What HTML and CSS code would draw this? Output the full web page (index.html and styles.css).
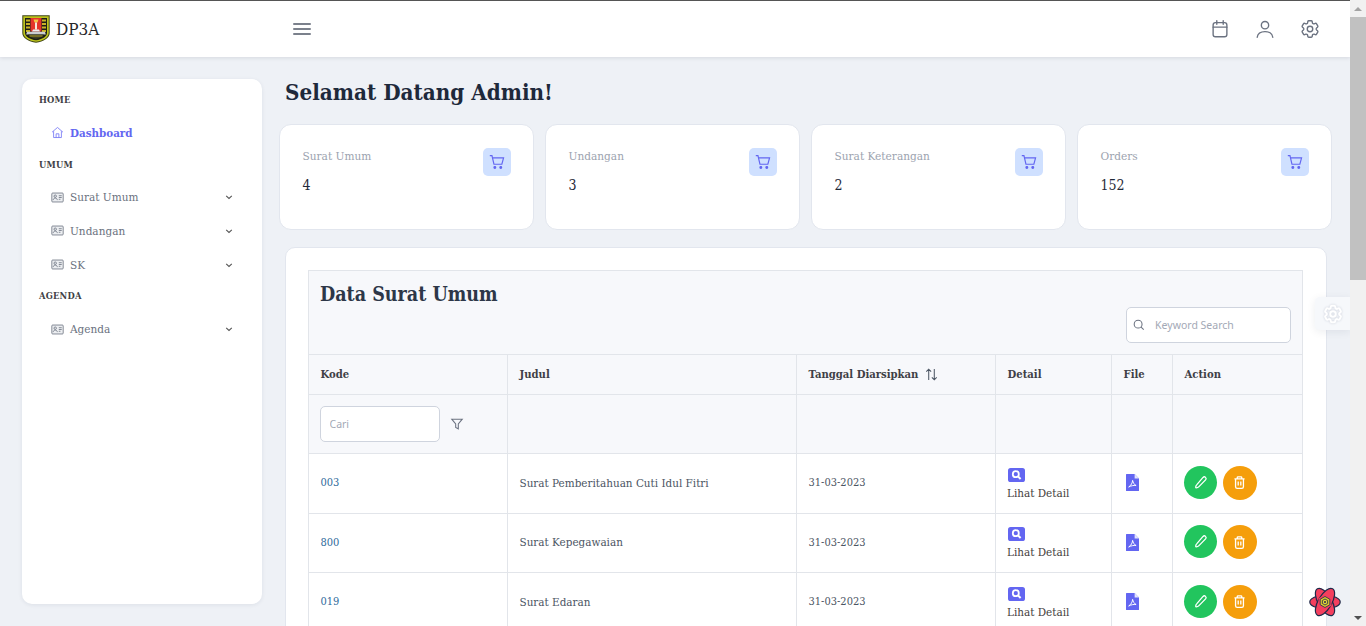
FILE: index.html
```html
<!DOCTYPE html>
<html lang="id">
<head>
<meta charset="utf-8">
<title>DP3A</title>
<link rel="stylesheet" href="styles.css">
</head>
<body>
<svg class="sprite" aria-hidden="true">
  <symbol id="gear" viewBox="0 0 24 24"><path d="M9.594 3.940c.09-.542.56-.94 1.110-.94h2.593c.55 0 1.020.398 1.110.94l.213 1.281c.063.374.313.686.645.870.074.040.147.083.22.127.324.196.72.257 1.075.124l1.217-.456a1.125 1.125 0 011.370.49l1.296 2.247a1.125 1.125 0 01-.26 1.431l-1.003.827c-.293.24-.438.613-.431.992a6.759 6.759 0 010 .255c-.007.378.138.75.43.99l1.005.828c.424.35.534.954.26 1.43l-1.298 2.247a1.125 1.125 0 01-1.369.491l-1.217-.456c-.355-.133-.75-.072-1.076.124a6.570 6.570 0 01-.22.128c-.331.183-.581.495-.644.869l-.213 1.280c-.09.543-.56.941-1.110.941h-2.594c-.55 0-1.020-.398-1.110-.94l-.213-1.281c-.062-.374-.312-.686-.644-.87a6.520 6.520 0 01-.22-.127c-.325-.196-.72-.257-1.076-.124l-1.217.456a1.125 1.125 0 01-1.369-.49l-1.297-2.247a1.125 1.125 0 01.26-1.431l1.004-.827c.292-.24.437-.613.43-.992a6.932 6.932 0 010-.255c.007-.378-.138-.75-.43-.99l-1.004-.828a1.125 1.125 0 01-.26-1.430l1.297-2.247a1.125 1.125 0 011.370-.491l1.216.456c.356.133.751.072 1.076-.124.072-.044.146-.087.22-.128.332-.183.582-.495.644-.869l.214-1.281z"/><circle cx="12" cy="12" r="3"/></symbol>
  <symbol id="idcard" viewBox="0 0 16 16"><rect x="1" y="2.500" width="14" height="11" rx="1" fill="#eceef1"/><circle cx="5.200" cy="6.400" r="1.500"/><path d="M2.600 11.200c.3-1.800 1.300-2.400 2.600-2.400s2.300.6 2.600 2.400M9.600 5.800h3.600M9.600 8h3.600M9.600 10.200h2"/></symbol>
  <symbol id="chev" viewBox="0 0 12 12"><path d="M3.200 4.800 6 7.400l2.800-2.600"/></symbol>
  <symbol id="cart" viewBox="0 0 20 20"><path d="M2 3h2.400l2.200 9.500h8.800l1.900-7H5"/><circle cx="7.600" cy="16" r="1" fill="currentColor"/><circle cx="14.200" cy="16" r="1" fill="currentColor"/></symbol>
  <symbol id="lens" viewBox="0 0 17 14"><rect width="17" height="14" rx="2.600" fill="#6366f1"/><circle cx="7.800" cy="6.200" r="3" fill="none" stroke="#fff" stroke-width="1.800"/><path d="m10 8.400 2.600 2.600" fill="none" stroke="#fff" stroke-width="2"/></symbol>
  <symbol id="pdf" viewBox="0 0 13 17"><path d="M.6 0h8l4.400 4.400v12a.6.6 0 0 1-.6.600H.6a.6.6 0 0 1-.6-.6V.6A.6.6 0 0 1 .6 0z" fill="#6366f1"/><path d="M8.600 .1 12.900 4.400H8.600z" fill="#e4e5fd"/><path d="M6.600 6.400c-.1 2.200-1.400 5-3.900 6.600 2.300-1.200 4.800-1.800 7.400-1.500-1.800-.7-3-2.800-3.500-5.100z" fill="none" stroke="#fff" stroke-width="1"/></symbol>
  <symbol id="pencil" viewBox="0 0 16 16"><path d="M10.700 2.600a1.800 1.800 0 0 1 2.700 2.600l-7.300 7.500c-.7.700-1.500 1-2.500 1-.5 0-.7-.3-.7-.7 0-1 .3-1.800 1-2.500z"/></symbol>
  <symbol id="trash" viewBox="0 0 16 16"><path d="M2.600 4.200h10.800M5.600 4.200V2.600c0-.4.300-.7.700-.7h3.400c.4 0 .7.300.7.700v1.600M3.800 4.200v8.300c0 1 .7 1.700 1.700 1.700h5c1 0 1.700-.7 1.700-1.700V4.200M6.600 7v4.200M9.400 7v4.200"/></symbol>
</svg>

<div class="window">
  <div class="page">
    <header class="topbar">
      <div class="brand">
        <svg class="logo" viewBox="0 0 28 28" aria-hidden="true">
          <path d="M.3 .3h27.400v17.700c0 4.800-6.200 8.900-13.700 9.700C6.500 26.900.3 22.800.3 18z" fill="#3f4414"/>
          <path d="M1.300 1.300h25.400v16.600c0 4.300-5.800 8-12.700 8.800-6.900-.8-12.700-4.500-12.700-8.800z" fill="#bcc41c"/>
          <path d="M3 3h22v15c0 3.500-5 6.600-11 7.300-6-.7-11-3.800-11-7.300z" fill="#1d1f14"/>
          <g fill="#c9b327">
            <rect x="4" y="4.500" width="4" height="2"/><rect x="4" y="8" width="4" height="2"/><rect x="4" y="11.500" width="4" height="2"/><rect x="4" y="15" width="4" height="2"/>
            <rect x="20" y="4.500" width="4" height="2"/><rect x="20" y="8" width="4" height="2"/><rect x="20" y="11.500" width="4" height="2"/><rect x="20" y="15" width="4" height="2"/>
          </g>
          <rect x="8.500" y="3" width="11" height="13.500" fill="#e5342a"/>
          <path d="M11.500 4.500h5l-1 3h-3z" fill="#f3c445"/>
          <path d="M13 7.500h2v7h-2z" fill="#f6e7d9"/>
          <path d="M11 14.500h6l1 2h-8z" fill="#f0f0f0"/>
          <path d="M5 16.800h18l.8 2.700H4.200z" fill="#c9cdd0"/>
          <path d="M6 19.500h16c-1.500 2.200-4.500 3.800-8 4.300-3.500-.5-6.500-2.100-8-4.300z" fill="#3b3f24"/>
          <path d="M7.500 21h13" stroke="#c9b327" stroke-width=".8"/>
        </svg>
        <span class="brand-name">DP3A</span>
      </div>
      <button class="burger" aria-label="Menu"><i></i><i></i><i></i></button>
      <div class="top-actions">
        <svg class="top-icon" viewBox="0 0 24 24"><rect x="4.500" y="5" width="15" height="15.500" rx="2.500"/><path d="M8.500 2.800v4M15.500 2.800v4M4.500 10h15"/></svg>
        <svg class="top-icon" viewBox="0 0 24 24"><circle cx="12" cy="7.800" r="4"/><path d="M3.500 21c.6-4.200 4-6.200 8.500-6.200s7.900 2 8.500 6.200"/></svg>
        <svg class="top-icon" viewBox="0 0 24 24"><use href="#gear"/></svg>
      </div>
    </header>

    <div class="content">
      <aside class="sidebar">
        <h4 class="nav-head">HOME</h4>
        <a class="nav-item active"><svg class="nav-ic" viewBox="0 0 16 16"><path d="M1.300 7.600 8 1.800l6.700 5.800M3.200 6.500v7.700h9.600V6.500M6.300 14.200V9.600h3.400v4.600"/></svg><span>Dashboard</span></a>
        <h4 class="nav-head">UMUM</h4>
        <a class="nav-item"><svg class="nav-ic"><use href="#idcard"/></svg><span>Surat Umum</span><svg class="chev"><use href="#chev"/></svg></a>
        <a class="nav-item"><svg class="nav-ic"><use href="#idcard"/></svg><span>Undangan</span><svg class="chev"><use href="#chev"/></svg></a>
        <a class="nav-item"><svg class="nav-ic"><use href="#idcard"/></svg><span>SK</span><svg class="chev"><use href="#chev"/></svg></a>
        <h4 class="nav-head">AGENDA</h4>
        <a class="nav-item"><svg class="nav-ic"><use href="#idcard"/></svg><span>Agenda</span><svg class="chev"><use href="#chev"/></svg></a>
      </aside>

      <main class="main">
        <h1 class="welcome">Selamat Datang Admin!</h1>
        <section class="stats">
          <article class="stat"><div><p class="stat-label">Surat Umum</p><p class="stat-value">4</p></div><span class="stat-ic"><svg><use href="#cart"/></svg></span></article>
          <article class="stat"><div><p class="stat-label">Undangan</p><p class="stat-value">3</p></div><span class="stat-ic"><svg><use href="#cart"/></svg></span></article>
          <article class="stat"><div><p class="stat-label">Surat Keterangan</p><p class="stat-value">2</p></div><span class="stat-ic"><svg><use href="#cart"/></svg></span></article>
          <article class="stat"><div><p class="stat-label">Orders</p><p class="stat-value">152</p></div><span class="stat-ic"><svg><use href="#cart"/></svg></span></article>
        </section>

        <section class="panel">
          <table class="data">
            <colgroup><col class="c1"><col class="c2"><col class="c3"><col class="c4"><col class="c5"><col class="c6"></colgroup>
            <thead>
              <tr class="title-row"><th colspan="6">
                <h2 class="table-title">Data Surat Umum</h2>
                <div class="search-wrap"><label class="search"><svg viewBox="0 0 16 16"><circle cx="7" cy="7" r="4.500"/><path d="m10.400 10.400 3 3"/></svg><input type="text" placeholder="Keyword Search"></label></div>
              </th></tr>
              <tr class="head-row">
                <th>Kode</th><th>Judul</th>
                <th>Tanggal Diarsipkan <svg class="sort" viewBox="0 0 14 14"><path d="M4 13V1.200M1.400 3.800 4 1.200l2.600 2.600M10 1v11.800M7.400 10.200l2.600 2.600 2.600-2.600"/></svg></th>
                <th>Detail</th><th>File</th><th>Action</th>
              </tr>
              <tr class="filter-row">
                <td><div class="filter"><input type="text" placeholder="Cari"><svg viewBox="0 0 16 16"><path d="M2 2.500h12L9.500 8v5.500l-3-1.500V8z"/></svg></div></td>
                <td></td><td></td><td></td><td></td><td></td>
              </tr>
            </thead>
            <tbody>
              <tr>
                <td class="code">003</td><td>Surat Pemberitahuan Cuti Idul Fitri</td><td class="date">31-03-2023</td>
                <td class="detail"><svg><use href="#lens"/></svg><span>Lihat Detail</span></td>
                <td><svg class="pdf"><use href="#pdf"/></svg></td>
                <td><div class="actions"><button class="act green"><svg><use href="#pencil"/></svg></button><button class="act orange"><svg><use href="#trash"/></svg></button></div></td>
              </tr>
              <tr>
                <td class="code">800</td><td>Surat Kepegawaian</td><td class="date">31-03-2023</td>
                <td class="detail"><svg><use href="#lens"/></svg><span>Lihat Detail</span></td>
                <td><svg class="pdf"><use href="#pdf"/></svg></td>
                <td><div class="actions"><button class="act green"><svg><use href="#pencil"/></svg></button><button class="act orange"><svg><use href="#trash"/></svg></button></div></td>
              </tr>
              <tr>
                <td class="code">019</td><td>Surat Edaran</td><td class="date">31-03-2023</td>
                <td class="detail"><svg><use href="#lens"/></svg><span>Lihat Detail</span></td>
                <td><svg class="pdf"><use href="#pdf"/></svg></td>
                <td><div class="actions"><button class="act green"><svg><use href="#pencil"/></svg></button><button class="act orange"><svg><use href="#trash"/></svg></button></div></td>
              </tr>
            </tbody>
          </table>
        </section>
      </main>
    </div>

    <div class="float-gear"><svg viewBox="0 0 24 24"><use href="#gear"/></svg></div>
    <svg class="atom" viewBox="0 0 32 32" aria-hidden="true">
      <g fill="#f43f5e" stroke="#1e2a4a" stroke-width="1.200">
        <ellipse cx="16" cy="16" rx="15.200" ry="6.800"/>
        <ellipse cx="16" cy="16" rx="15.200" ry="6.800" transform="rotate(60 16 16)"/>
        <ellipse cx="16" cy="16" rx="15.200" ry="6.800" transform="rotate(120 16 16)"/>
      </g>
      <path d="M16 8.500 22.500 12.250v7.500L16 23.500l-6.500-3.750v-7.500z" fill="#f43f5e"/>
      <path d="M16 10.500 20.800 13.200v5.600L16 21.500l-4.800-2.700v-5.600z" fill="#d8c72e" stroke="#1e2a4a" stroke-width=".8"/>
      <path d="M16 13 18.600 14.500v3L16 19l-2.600-1.500v-3z" fill="#e5d53a" stroke="#1e2a4a" stroke-width=".8"/>
      <circle cx="16" cy="16" r="1" fill="#1e2a4a"/>
    </svg>
  </div>
  <div class="scrollbar" aria-hidden="true">
    <span class="arrow up"></span>
    <span class="track"><span class="thumb"></span></span>
    <span class="arrow down"></span>
  </div>
</div>
</body>
</html>
```

FILE: styles.css
```css
* { box-sizing: border-box; }
html, body { margin: 0; height: 100%; overflow: hidden; }
body { font-family: "DejaVu Serif Condensed", "DejaVu Serif", "Liberation Serif", serif; color: #374151; font-size: 12px; }
.sprite { display: none; }
.window { display: flex; height: 626px; width: 1366px; }
.page { position: relative; flex: 1; min-width: 0; background: #eef1f6; overflow: hidden; display: flex; flex-direction: column; }

.topbar { height: 57px; flex: none; background: #fff; border-top: 1px solid #555; display: flex; align-items: center; padding-left: 22px; padding-right: 29px; box-shadow: 0 1px 4px rgba(30,41,59,.12); position: relative; z-index: 2; }
.brand { display: flex; align-items: center; gap: 6px; width: 271px; }
.logo { width: 28px; height: 28px; }
.brand-name { font-size: 17px; color: #27272a; }
.burger { border: 0; background: none; padding: 0; width: 18px; display: flex; flex-direction: column; gap: 3.500px; }
.burger i { display: block; height: 1.500px; background: #7b818c; border-radius: 1px; }
.top-actions { margin-left: auto; display: flex; gap: 23px; }
.top-icon { width: 22px; height: 22px; fill: none; stroke: #6b7280; stroke-width: 1.500; stroke-linecap: round; stroke-linejoin: round; }

.content { flex: 1; min-height: 0; display: flex; align-items: flex-start; padding: 22px 18px 0 22px; gap: 17px; }

.sidebar { width: 240px; height: 525px; flex: none; background: #fff; border-radius: 10px; box-shadow: 0 1px 4px rgba(30,41,59,.08); padding: 14px 17px; }
.nav-head { margin: 0; font-size: 9.300px; font-weight: 700; color: #3f3f46; line-height: 14px; letter-spacing: .2px; }
.nav-head + .nav-item { margin-top: 9px; }
.nav-item + .nav-head { margin-top: 8px; }
.nav-item { display: flex; align-items: center; height: 33.600px; padding-left: 12px; color: #6b7280; font-size: 11.700px; gap: 6px; }
.nav-item.active { color: #6366f1; font-weight: 700; font-size: 11.500px; }
.nav-ic { flex: none; fill: none; stroke: #6b7280; stroke-width: 1; }
.nav-item .nav-ic { width: 13px; height: 13px; }
.active .nav-ic { stroke: #7073f5; }
.chev { width: 12px; height: 12px; margin-left: auto; margin-right: 10px; fill: none; stroke: #555; stroke-width: 1.100; }

.main { flex: 1; min-width: 0; }
.welcome { margin: 0 0 19px 6px; font-size: 22.250px; line-height: 26px; font-weight: 700; color: #1e293b; }
.stats { display: grid; grid-template-columns: repeat(4, 1fr); gap: 11px; }
.stat { height: 106px; background: #fff; border: 1px solid #e2e6ee; border-radius: 12px; padding: 22px 22px 22px 22.500px; display: flex; justify-content: space-between; align-items: flex-start; }
.stat p { margin: 0; }
.stat-label { font-size: 11.750px; line-height: 18px; color: #9ca3af; }
.stat-value { font-size: 14px; line-height: 20px; color: #1f2937; margin-top: 10px !important; }
.stat-ic { width: 28px; height: 28px; margin-top: 1px; border-radius: 5px; background: #cfe0ff; color: #6366f1; display: flex; align-items: center; justify-content: center; }
.stat-ic svg { width: 18px; height: 18px; fill: none; stroke: currentColor; stroke-width: 1.300; }

.panel { margin: 17px 5px 0 6px; background: #fff; border: 1px solid #e2e6ee; border-radius: 10px; padding: 22px; }
.data { width: 994px; table-layout: fixed; border-collapse: collapse; }
.c1 { width: 199px; } .c2 { width: 289px; } .c3 { width: 199px; } .c4 { width: 116px; } .c5 { width: 61px; } .c6 { width: 130px; }
.data th, .data td { border: 1px solid #e2e5ea; padding: 0 11.500px; text-align: left; vertical-align: middle; }
.data td { color: #4b5563; font-size: 11.600px; padding-bottom: 1px; }
thead { background: #f7f8fb; }
.title-row th { height: 84px; padding: 0 11px 11px 11px; vertical-align: top; }
.table-title { margin: 11px 0 0; font-size: 19.500px; line-height: 26px; font-weight: 700; color: #2d3748; }
.search-wrap { display: flex; justify-content: flex-end; margin-top: -1px; }
.search { width: 165px; height: 36px; display: flex; align-items: center; gap: 9px; padding: 0 10px 0 5px; background: #fff; border: 1px solid #cfd4de; border-radius: 5px; }
.search svg { width: 14px; height: 14px; flex: none; fill: none; stroke: #6b7280; stroke-width: 1.200; }
input { border: 0; outline: 0; background: none; padding: 0; min-width: 0; width: 100%; font-family: "Noto Sans", "Open Sans", sans-serif; font-size: 10.500px; }
input::placeholder { color: #a3a9b6; opacity: 1; }
.data .head-row th { height: 40px; padding-bottom: 2px; font-size: 11.200px; font-weight: 700; color: #3f3f46; }
.sort { width: 13px; height: 13px; margin-left: 3px; vertical-align: -3px; fill: none; stroke: #4b5563; stroke-width: 1.100; }
.filter-row td { height: 59px; }
.filter { display: flex; align-items: center; gap: 10px; margin-left: -1px; }
.filter input { width: 120px; height: 36px; flex: none; background: #fff; border: 1px solid #cfd4de; border-radius: 5px; padding: 0 9px; }
.filter svg { width: 14px; height: 14px; fill: none; stroke: #6b7280; stroke-width: 1.200; }
tbody tr { height: 59.500px; }
.data .code { color: #2f6a9b; font-size: 11px; }
.data .date { font-size: 11px; }
.data .detail { padding-left: 11px; }
.detail svg { display: block; width: 17px; height: 14px; margin: 3px 0 4px 1px; }
.detail span { display: block; line-height: 15px; color: #44403c; }
.pdf { display: block; width: 13px; height: 17px; margin-left: 2px; }
.actions { display: flex; gap: 6px; margin-left: -1px; }
.act { width: 33px; height: 33px; padding: 0; border: 0; border-radius: 50%; display: flex; align-items: center; justify-content: center; color: #fff; }
.act svg { width: 15px; height: 15px; fill: none; stroke: #fff; stroke-width: 1.400; }
.green { background: #22c55e; }
.orange { background: #f59e0b; width: 34px; height: 34px; }

.float-gear { position: absolute; left: 1315px; top: 297px; width: 35px; height: 33px; background: #f6f8fb; border-radius: 5px 0 0 5px; box-shadow: 0 2px 8px rgba(30,41,59,.08); display: flex; align-items: center; padding-left: 7px; z-index: 3; }
.float-gear svg { width: 22px; height: 22px; fill: none; stroke: #fff; stroke-width: 2.200; filter: drop-shadow(0 0 1px #c9ced9); }
.atom { position: absolute; left: 1309px; top: 586px; width: 32px; height: 32px; z-index: 3; }

.scrollbar { width: 16px; flex: none; background: #f1f1f1; display: flex; flex-direction: column; }
.arrow { height: 17px; flex: none; position: relative; display: flex; align-items: center; justify-content: center; }
.arrow::before { content: ""; border-left: 4px solid transparent; border-right: 4px solid transparent; }
.up::before { border-bottom: 4px solid #a3a3a3; }
.down::before { border-top: 4px solid #505050; }
.track { flex: 1; }
.thumb { display: block; height: 263px; background: #c1c1c1; }
```
